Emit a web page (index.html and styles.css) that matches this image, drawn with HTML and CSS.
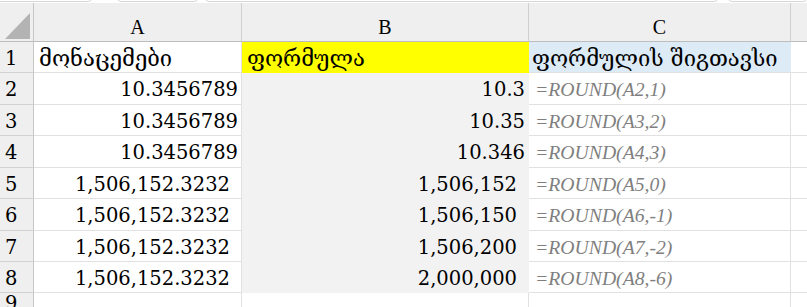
FILE: index.html
```html
<!DOCTYPE html>
<html lang="ka">
<head>
<meta charset="utf-8">
<title>ROUND</title>
<link rel="stylesheet" href="styles.css">
</head>
<body>
<div class="topbar">
  <div class="tab t1"></div>
  <div class="tab t2"></div>
  <div class="tab t3"></div>
  <div class="tab t4"></div>
</div>
<div class="sheet">
  <div class="corner"><svg width="34" height="39" viewBox="0 0 34 39"><polygon points="5,36 30,36 30,10" fill="#b3b3b3"/></svg></div>
  <div class="hdr">A</div>
  <div class="hdr">B</div>
  <div class="hdr">C</div>
  <div class="hdr last"></div>

  <div class="rh">1</div>
  <div class="c ge">მონაცემები</div>
  <div class="c ge yel">ფორმულა</div>
  <div class="c ge blue">ფორმულის შიგთავსი</div>
  <div class="c d"></div>

  <div class="rh">2</div>
  <div class="c num">10.3456789</div>
  <div class="c num fill">10.3</div>
  <div class="c f">=ROUND(A2,1)</div>
  <div class="c d"></div>

  <div class="rh">3</div>
  <div class="c num">10.3456789</div>
  <div class="c num fill">10.35</div>
  <div class="c f">=ROUND(A3,2)</div>
  <div class="c d"></div>

  <div class="rh">4</div>
  <div class="c num">10.3456789</div>
  <div class="c num fill">10.346</div>
  <div class="c f">=ROUND(A4,3)</div>
  <div class="c d"></div>

  <div class="rh">5</div>
  <div class="c num pad">1,506,152.3232</div>
  <div class="c num fill pad">1,506,152</div>
  <div class="c f">=ROUND(A5,0)</div>
  <div class="c d"></div>

  <div class="rh">6</div>
  <div class="c num pad">1,506,152.3232</div>
  <div class="c num fill pad">1,506,150</div>
  <div class="c f">=ROUND(A6,-1)</div>
  <div class="c d"></div>

  <div class="rh">7</div>
  <div class="c num pad">1,506,152.3232</div>
  <div class="c num fill pad">1,506,200</div>
  <div class="c f">=ROUND(A7,-2)</div>
  <div class="c d"></div>

  <div class="rh">8</div>
  <div class="c num pad">1,506,152.3232</div>
  <div class="c num fill pad">2,000,000</div>
  <div class="c f">=ROUND(A8,-6)</div>
  <div class="c d"></div>

  <div class="rh">9</div>
  <div class="c"></div>
  <div class="c"></div>
  <div class="c"></div>
  <div class="c d"></div>
</div>
</body>
</html>
```

FILE: styles.css
```css
html, body {
  margin: 0;
  padding: 0;
  background: #ffffff;
  overflow: hidden;
}

.topbar {
  height: 3px;
  display: flex;
  overflow: hidden;
  background: #ffffff;
}

.tab {
  height: 8px;
  margin-top: -6px;
  border: 1px solid #d6d6d6;
  border-radius: 4px;
  box-sizing: border-box;
}

.t1 { width: 97px; margin-left: -4px; }
.t2 { width: 83px; margin-left: 25px; }
.t3 { width: 520px; margin-left: 7px; }
.t4 { width: 80px; margin-left: 10px; }

.sheet {
  display: grid;
  grid-template-columns: 34px 208px 287px 262px 16px;
  grid-template-rows: 39px 31px 32px 31px 32px 31px 32px 31px 31px 20px;
  font-family: "DejaVu Serif", "DejaVu Sans", serif;
  color: #000000;
}

.corner {
  background: #efefef;
  border-right: 1px solid #c6c6c6;
  border-bottom: 1px solid #bdbdbd;
  box-sizing: border-box;
}

.corner svg {
  display: block;
}

.hdr {
  background: #efefef;
  border-right: 1px solid #d0d0d0;
  border-bottom: 1px solid #bdbdbd;
  box-sizing: border-box;
  font-family: "Liberation Serif", serif;
  font-size: 20px;
  text-align: center;
  padding-top: 13px;
  line-height: 22px;
}

.hdr.last {
  border-right: none;
}

.rh {
  background: #efefef;
  border-right: 1px solid #c6c6c6;
  border-bottom: 1px solid #d2d2d2;
  box-sizing: border-box;
  font-size: 19.5px;
  padding-left: 5px;
  padding-top: 2px;
  display: flex;
  align-items: center;
}

.c {
  border-right: 1px solid #e1e1e1;
  border-bottom: 1px solid #e1e1e1;
  box-sizing: border-box;
  white-space: nowrap;
  overflow: hidden;
  display: flex;
  align-items: center;
  padding-top: 2px;
  background: #ffffff;
}

.c.d {
  border-right: none;
}

.ge {
  font-size: 22px;
  padding-left: 5px;
}

.num {
  font-size: 19.5px;
  justify-content: flex-end;
  padding-right: 3px;
}

.num.pad {
  padding-right: 11px;
}

.fill {
  background: #f2f2f2;
  border-bottom-color: #f2f2f2;
  border-right-color: #f2f2f2;
}

.yel {
  background: #ffff00;
  border-bottom-color: #ffff00;
  border-right-color: #ffff00;
}

.blue {
  background: #ddebf7;
  border-right-color: #ddebf7;
  padding-left: 3px;
}

.f {
  font-family: "Liberation Serif", serif;
  font-style: italic;
  font-size: 19.7px;
  color: #7f7f7f;
  padding-left: 6px;
}
```
